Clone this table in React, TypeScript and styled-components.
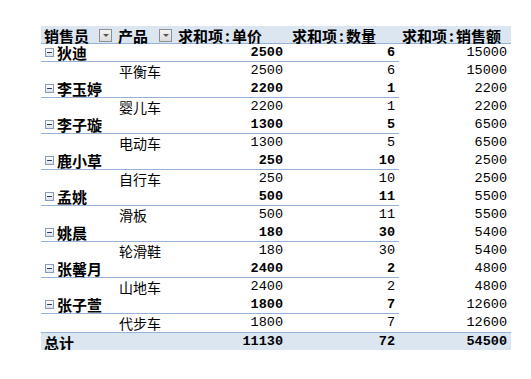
import React from "react";
import styled, { createGlobalStyle, css } from "styled-components";

const Global = createGlobalStyle`
  html, body { margin: 0; padding: 0; background: #ffffff; }
  body { font-family: "Noto Sans CJK SC", "Liberation Sans", sans-serif; }
`;

const Page = styled.div`
  padding: 26px 0 0 41px;
`;

const Grid = styled.div`
  width: 470px;
  display: flex;
  flex-direction: column;
`;

const Row = styled.div<{ $band?: boolean; $topLine?: boolean; $bottomLine?: boolean }>`
  display: grid;
  grid-template-columns: 74px 60px 112px 112px 112px;
  height: 18px;
  box-sizing: border-box;
  ${(p) => p.$band && css`background: #dce6f1;`}
  ${(p) => p.$topLine && css`border-top: 1px solid #95b3d7;`}
  ${(p) => p.$bottomLine && css`border-bottom: 1px solid #95b3d7;`}
`;

const Cell = styled.div<{ $right?: boolean; $line?: boolean }>`
  display: flex;
  align-items: center;
  justify-content: ${(p) => (p.$right ? "flex-end" : "flex-start")};
  padding: 0 4px 0 3px;
  height: 18px;
  box-sizing: border-box;
  white-space: nowrap;
  ${(p) => p.$line && css`border-bottom: 1px solid #95b3d7;`}
`;

const HeadText = styled.span`
  font-size: 15px;
  font-weight: 700;
  color: #000;
  line-height: 15px;
`;

const Colon = styled.span`
  display: inline-block;
  padding: 0 2px;
`;

const NameText = styled.span`
  font-size: 15px;
  font-weight: 700;
  color: #000;
  line-height: 15px;
`;

const ProductText = styled.span`
  font-size: 14px;
  font-weight: 400;
  color: #000;
  line-height: 14px;
  padding-left: 1px;
`;

const Num = styled.span<{ $bold?: boolean }>`
  font-family: "Liberation Mono", "DejaVu Sans Mono", monospace;
  font-size: 13.5px;
  font-weight: ${(p) => (p.$bold ? 700 : 400)};
  color: #000;
  line-height: 14px;
`;

const HeadCell = styled(Cell)`
  justify-content: space-between;
  padding-right: 3px;
`;

const DropBtn = styled.span`
  width: 13px;
  height: 13px;
  box-sizing: border-box;
  border: 1px solid #8e8f8f;
  background: linear-gradient(#f4f4f4, #dcdcdc);
  display: flex;
  align-items: center;
  justify-content: center;
  flex-shrink: 0;
`;

const Arrow = styled.span`
  width: 0;
  height: 0;
  border-left: 3px solid transparent;
  border-right: 3px solid transparent;
  border-top: 3px solid #555;
`;

const Minus = styled.span`
  width: 9px;
  height: 9px;
  box-sizing: border-box;
  border: 1px solid #8a9bb8;
  background: linear-gradient(#ffffff, #dde3ee);
  display: flex;
  align-items: center;
  justify-content: center;
  margin: 0 3px 0 2px;
  flex-shrink: 0;
  &::after {
    content: "";
    width: 5px;
    height: 1px;
    background: #2a3b5c;
  }
`;

type Rec = { name: string; product: string; price: number; qty: number; total: number };

const data: Rec[] = [
  { name: "狄迪", product: "平衡车", price: 2500, qty: 6, total: 15000 },
  { name: "李玉婷", product: "婴儿车", price: 2200, qty: 1, total: 2200 },
  { name: "李子璇", product: "电动车", price: 1300, qty: 5, total: 6500 },
  { name: "鹿小草", product: "自行车", price: 250, qty: 10, total: 2500 },
  { name: "孟姚", product: "滑板", price: 500, qty: 11, total: 5500 },
  { name: "姚晨", product: "轮滑鞋", price: 180, qty: 30, total: 5400 },
  { name: "张馨月", product: "山地车", price: 2400, qty: 2, total: 4800 },
  { name: "张子萱", product: "代步车", price: 1800, qty: 7, total: 12600 },
];

const Sum = ({ label }: { label: string }) => (
  <HeadText>
    求和项<Colon>:</Colon>
    {label}
  </HeadText>
);

export default function App() {
  return (
    <>
      <Global />
      <Page>
        <Grid>
          <Row $band $bottomLine>
            <HeadCell>
              <HeadText>销售员</HeadText>
              <DropBtn>
                <Arrow />
              </DropBtn>
            </HeadCell>
            <HeadCell>
              <HeadText>产品</HeadText>
              <DropBtn>
                <Arrow />
              </DropBtn>
            </HeadCell>
            <Cell>
              <Sum label="单价" />
            </Cell>
            <Cell style={{ paddingLeft: 5 }}>
              <Sum label="数量" />
            </Cell>
            <Cell>
              <Sum label="销售额" />
            </Cell>
          </Row>
          {data.map((d) => (
            <React.Fragment key={d.name}>
              <Row>
                <Cell $line style={{ paddingLeft: 2 }}>
                  <Minus />
                  <NameText>{d.name}</NameText>
                </Cell>
                <Cell $line />
                <Cell $line $right>
                  <Num $bold>{d.price}</Num>
                </Cell>
                <Cell $line $right>
                  <Num $bold>{d.qty}</Num>
                </Cell>
                <Cell $right>
                  <Num>{d.total}</Num>
                </Cell>
              </Row>
              <Row>
                <Cell />
                <Cell>
                  <ProductText>{d.product}</ProductText>
                </Cell>
                <Cell $right>
                  <Num>{d.price}</Num>
                </Cell>
                <Cell $right>
                  <Num>{d.qty}</Num>
                </Cell>
                <Cell $right>
                  <Num>{d.total}</Num>
                </Cell>
              </Row>
            </React.Fragment>
          ))}
          <Row $band $topLine>
            <Cell>
              <NameText>总计</NameText>
            </Cell>
            <Cell />
            <Cell $right>
              <Num $bold>11130</Num>
            </Cell>
            <Cell $right>
              <Num $bold>72</Num>
            </Cell>
            <Cell $right>
              <Num $bold>54500</Num>
            </Cell>
          </Row>
        </Grid>
      </Page>
    </>
  );
}
